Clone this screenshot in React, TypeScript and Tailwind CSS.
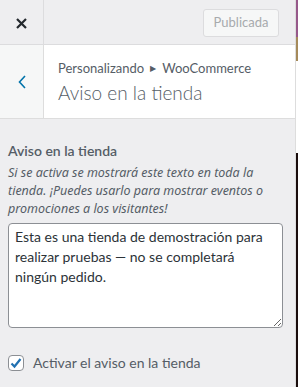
import { useState } from 'react';

const font = { fontFamily: 'Lato, "Noto Sans", Arial, sans-serif' };
const descFont = { fontFamily: '"Noto Sans", "Open Sans", Arial, sans-serif' };

export default function App() {
  const [enabled, setEnabled] = useState(true);
  const [notice, setNotice] = useState(
    'Esta es una tienda de demostración para realizar pruebas — no se completará ningún pedido.'
  );

  return (
    <div className="flex h-[387px] w-[298px] overflow-hidden bg-[#eeeef0]" style={font}>
      <div className="flex w-[296px] flex-col border-r border-[#dddddd]">
        {/* top bar */}
        <div className="flex h-[45px] shrink-0 items-center border-b border-[#dcdcde] bg-[#eeeef0]">
          <button className="flex h-full w-[44px] items-center justify-center border-r border-[#dcdcde] pt-[2px] text-[#23282d]">
            <svg width="11" height="11" viewBox="0 0 11 11">
              <path d="M1 1 L10 10 M10 1 L1 10" stroke="currentColor" strokeWidth="2.2" />
            </svg>
          </button>
          <div className="flex flex-1 justify-end pr-[16px] pt-[2px]">
            <button
              disabled
              className="h-[28px] w-[76px] rounded-[3px] border border-[#dcdcde] bg-[#f6f7f7] text-[13px] text-[#a7aaad]"
            >
              Publicada
            </button>
          </div>
        </div>

        {/* section header */}
        <div className="flex h-[74px] shrink-0 border-b border-[#dddddd] bg-white">
          <button className="flex w-[44px] items-center justify-center border-r border-[#dddddd] bg-[#f6f7f7] text-[#0073aa]">
            <svg width="8" height="14" viewBox="0 0 8 14">
              <path d="M7 1 L1.5 7 L7 13" stroke="currentColor" strokeWidth="1.6" fill="none" />
            </svg>
          </button>
          <div className="flex flex-col pl-[14px] pt-[14px]">
            <span className="flex items-center gap-[6px] text-[13px] leading-[18px] text-[#555d66]">
              Personalizando
              <span className="text-[8px] leading-none">▶</span>
              WooCommerce
            </span>
            <span className="mt-[3px] text-[19px] font-light leading-[26px] text-[#555d66]">Aviso en la tienda</span>
          </div>
        </div>

        {/* control */}
        <div className="flex flex-col px-[8px] pt-[22px]">
          <span className="text-[14px] font-semibold leading-[20px] text-[#555d66]">Aviso en la tienda</span>
          <p className="mt-[3px] text-[12.5px] italic leading-[18px] text-[#555d66]" style={descFont}>
            Si se activa se mostrará este texto en toda la tienda. ¡Puedes usarlo para mostrar eventos o promociones a
            los visitantes!
          </p>
          <textarea
            value={notice}
            onChange={(e) => setNotice(e.target.value)}
            className="mt-[5px] h-[105px] w-[275px] rounded-[4px] border border-[#8c8f94] bg-white px-[6px] py-[3px] text-[14px] leading-[20px] text-[#2c3338]"
            style={font}
          />
          <label className="mt-[24px] flex items-center gap-[9px] text-[14px] text-[#555d66]">
            <span
              onClick={() => setEnabled(!enabled)}
              className="flex h-[16px] w-[16px] items-center justify-center rounded-[4px] border border-[#8c8f94] bg-white"
            >
              {enabled && (
                <svg width="12" height="12" viewBox="0 0 12 12">
                  <path d="M1.5 6.5 L4.5 9.5 L10.5 2" stroke="#2271b1" strokeWidth="2.2" fill="none" />
                </svg>
              )}
            </span>
            Activar el aviso en la tienda
          </label>
        </div>
      </div>

      {/* preview edge */}
      <div className="flex w-[2px] flex-col">
        <div className="h-[37px] bg-[#96588a]" />
        <div className="h-[24px] bg-[#a58a5a]" />
        <div className="h-[92px] bg-white" />
        <div className="flex-1 bg-[#1a0d0d]" />
      </div>
    </div>
  );
}
